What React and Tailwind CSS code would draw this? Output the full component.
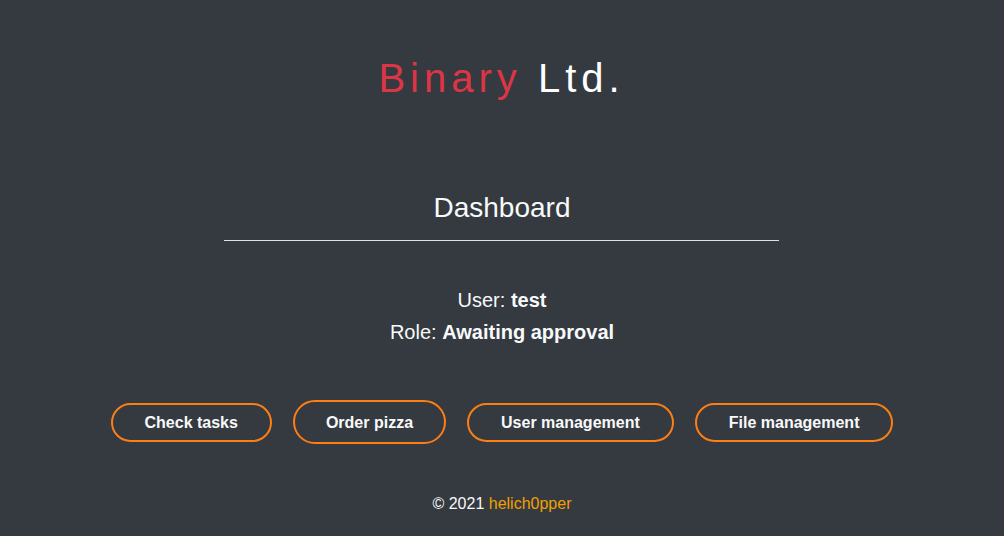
import React from "react";

export default function App() {
  const btn =
    "rounded-full border-2 border-[#fd7e14] px-8 text-[16px] font-bold text-[#f8f9fa] leading-[19px] flex items-center justify-center";
  return (
    <div
      className="min-h-[536px] w-full bg-[#343a40] text-[#f8f9fa] flex flex-col items-center"
      style={{ fontFamily: '"Liberation Sans", Arial, sans-serif' }}
    >
      <h1 className="pt-[54px] pr-px text-[40px] leading-[48px] tracking-[5px] font-normal">
        <span className="text-[#dc3545]">Binary</span> <span className="text-white">Ltd.</span>
      </h1>
      <h2 className="mt-[90px] text-[28px] leading-[32px] font-normal">Dashboard</h2>
      <div className="mt-4 h-px w-[555px] mr-px bg-[#dee2e6]" />
      <div className="mt-[43px] flex flex-col items-center text-[20px] leading-[32px]">
        <div>
          User: <b>test</b>
        </div>
        <div>
          Role: <b>Awaiting approval</b>
        </div>
      </div>
      <div className="mt-[52px] flex items-center gap-[21px]">
        <button className={btn + " h-[39px]"}>Check tasks</button>
        <button className={btn + " h-[44px] px-[31px]"}>Order pizza</button>
        <button className={btn + " h-[39px]"}>User management</button>
        <button className={btn + " h-[39px]"}>File management</button>
      </div>
      <div className="mt-[50px] text-[16px] leading-[20px]">
        © 2021 <span className="text-[#f0a000]">helich0pper</span>
      </div>
    </div>
  );
}
